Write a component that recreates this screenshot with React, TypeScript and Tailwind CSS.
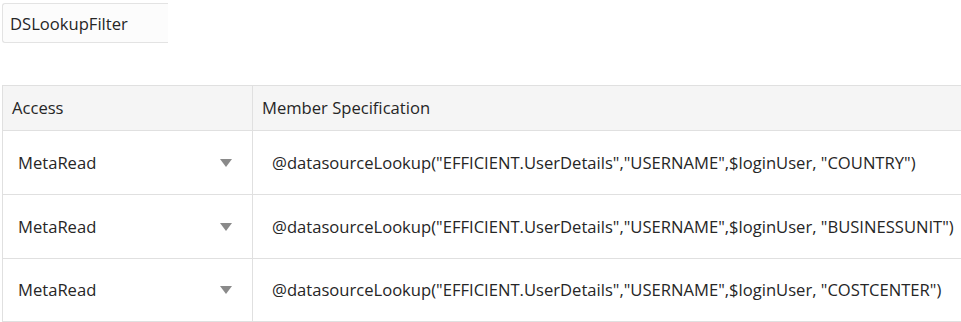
const rows = ["COUNTRY", "BUSINESSUNIT", "COSTCENTER"];

function Caret() {
  return (
    <svg width="12" height="8" viewBox="0 0 12 8" className="shrink-0">
      <path d="M0 0h12L6 8z" fill="#8a8a8a" />
    </svg>
  );
}

export default function App() {
  return (
    <div className="w-[961px] h-[322px] bg-white text-[#262626] text-[16.6px] font-['Open_Sans',sans-serif] overflow-hidden">
      <div className="ml-[2px] mt-[3px] w-[166px] h-[40px] border border-r-0 border-[#e3e3e3] rounded-l-[3px] bg-[#fcfcfc] flex items-center pl-[7px] pt-[3px]">
        DSLookupFilter
      </div>
      <div className="mt-[42px] ml-[2px] border-t border-l border-[#e0e0e0]">
        <div className="flex h-[45px] bg-[#f5f5f5] border-b border-[#e0e0e0]">
          <div className="w-[250px] border-r border-[#e0e0e0] flex items-center pl-[9px] pt-[1px]">Access</div>
          <div className="flex-1 flex items-center pl-[9px] pt-[1px]">Member Specification</div>
        </div>
        {rows.map((r, i) => (
          <div key={r} className={`flex border-b border-[#e0e0e0] ${i === 2 ? "h-[63px]" : "h-[64px]"}`}>
            <div className="w-[250px] border-r border-[#e0e0e0] flex items-center pl-[15px] pr-[20px] justify-between">
              <span className="pt-[1px]">MetaRead</span>
              <Caret />
            </div>
            <div className="flex-1 flex items-center pl-[19px] pt-[1px] whitespace-nowrap">
              @datasourceLookup("EFFICIENT.UserDetails","USERNAME",$loginUser, "{r}")
            </div>
          </div>
        ))}
      </div>
    </div>
  );
}
